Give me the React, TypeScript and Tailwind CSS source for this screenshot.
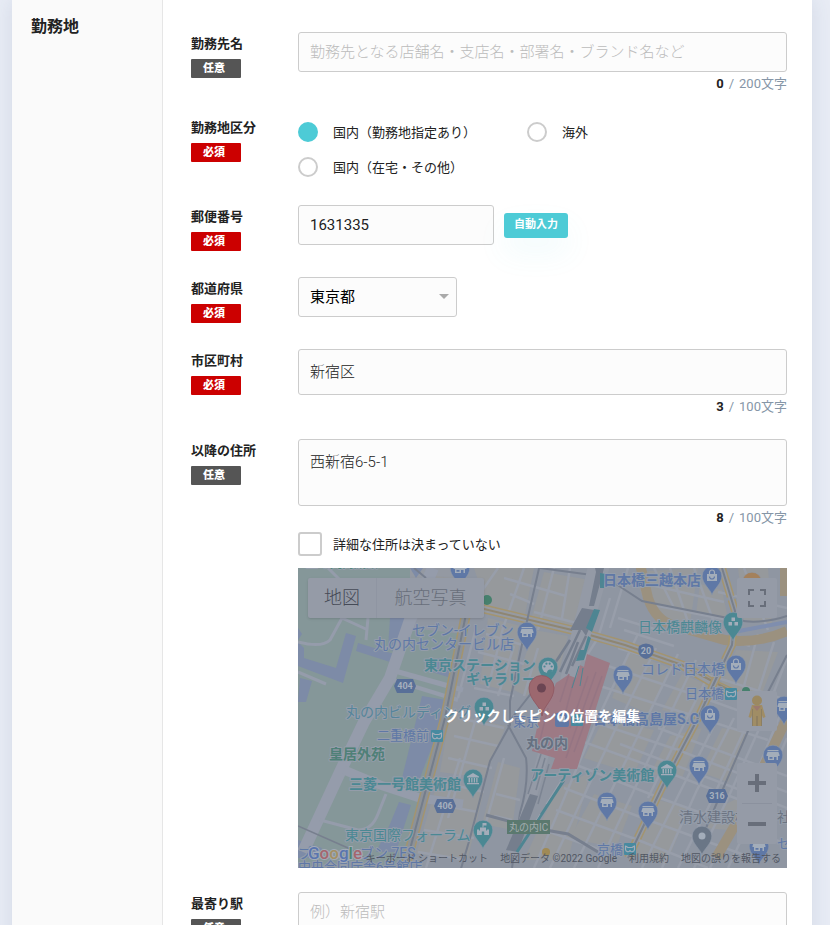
import { ReactNode, useState } from "react";

type PinKind = "shop" | "bag" | "museum" | "flower" | "palette" | "school" | "dot";

interface IPin {
  x: number;
  y: number;
  kind: PinKind;
  color: string;
}

interface ILabel {
  x: number;
  y: number;
  text: string;
  color: string;
  size?: number;
  bold?: boolean;
}

const BLUE = "#5f78a6";
const TEAL = "#4b8893";
const GRAY = "#6a7686";

const pins: IPin[] = [
  { x: 162, y: 0, kind: "shop", color: BLUE },
  { x: 229, y: 64, kind: "shop", color: BLUE },
  { x: 250, y: 99, kind: "palette", color: TEAL },
  { x: 186, y: 139, kind: "flower", color: TEAL },
  { x: 325, y: 107, kind: "shop", color: BLUE },
  { x: 414, y: 8, kind: "bag", color: BLUE },
  { x: 454, y: 14, kind: "dot", color: "#a4815c" },
  { x: 435, y: 54, kind: "flower", color: TEAL },
  { x: 438, y: 97, kind: "bag", color: BLUE },
  { x: 412, y: 147, kind: "bag", color: BLUE },
  { x: 486, y: 138, kind: "shop", color: BLUE },
  { x: 175, y: 211, kind: "museum", color: TEAL },
  { x: 185, y: 262, kind: "school", color: TEAL },
  { x: 309, y: 234, kind: "shop", color: BLUE },
  { x: 369, y: 202, kind: "museum", color: TEAL },
  { x: 401, y: 198, kind: "shop", color: BLUE },
  { x: 475, y: 187, kind: "shop", color: BLUE },
  { x: 350, y: 243, kind: "shop", color: BLUE },
  { x: 404, y: 268, kind: "dot", color: GRAY },
  { x: 461, y: 278, kind: "shop", color: BLUE },
];

const labels: ILabel[] = [
  { x: 8, y: 0, text: "三の丸尚蔵館", color: "#4d8577", size: 12 },
  { x: 114, y: 67, text: "セブン-イレブン", color: BLUE },
  { x: 76, y: 81, text: "丸の内センタービル店", color: BLUE },
  { x: 126, y: 102, text: "東京ステーション", color: TEAL, bold: true },
  { x: 168, y: 116, text: "ギャラリー", color: TEAL, bold: true },
  { x: 48, y: 149, text: "丸の内ビルディング", color: "#56859a" },
  { x: 79, y: 172, text: "二重橋前", color: BLUE, size: 13 },
  { x: 31, y: 191, text: "皇居外苑", color: "#4f8077", bold: true },
  { x: 51, y: 221, text: "三菱一号館美術館", color: TEAL, bold: true },
  { x: 47, y: 272, text: "東京国際フォーラム", color: TEAL },
  { x: 0, y: 290, text: "プ", color: BLUE },
  { x: 62, y: 290, text: "ブン 7ES", color: BLUE },
  { x: 0, y: 303, text: "中央合同庁舎6号館店", color: BLUE, size: 13 },
  { x: 305, y: 17, text: "日本橋三越本店", color: BLUE, bold: true },
  { x: 340, y: 64, text: "日本橋麒麟像", color: TEAL },
  { x: 343, y: 106, text: "コレド日本橋", color: BLUE },
  { x: 387, y: 130, text: "日本橋", color: BLUE, size: 13 },
  { x: 295, y: 156, text: "日本橋高島屋S.C", color: BLUE, bold: true },
  { x: 215, y: 158, text: "東京", color: BLUE, size: 13 },
  { x: 228, y: 180, text: "丸の内", color: "#667080", bold: true },
  { x: 232, y: 212, text: "アーティゾン美術館", color: TEAL, bold: true },
  { x: 299, y: 286, text: "京橋", color: BLUE, size: 13 },
  { x: 381, y: 254, text: "清水建設株式会社", color: "#6c7482" },
  { x: 479, y: 280, text: "セ", color: BLUE, size: 13 },
];

const routes = [
  { x: 107, y: 118, text: "404" },
  { x: 147, y: 238, text: "406" },
  { x: 419, y: 228, text: "316" },
];

const metros = [
  [139, 168],
  [279, 152],
  [433, 126],
  [332, 281],
];

// streets that run down to the left, then the ones that cross them
const streets = [
  "M200 0L172 40M226 0L205 60L190 120M256 0L240 62M272 0L264 50M206 10L268 28M212 26L236 36M236 44L290 58",
  "M216 78L200 128M240 80L226 128M178 60L160 130M188 66L228 78M180 84L226 96M176 120L216 128",
  "M160 150L206 160M156 168L200 178M150 190L194 200M142 214L186 224M136 236L180 244M126 262L176 270M120 284L168 292M178 150L150 250M162 190L128 300M206 190L186 262M198 226L222 232M196 248L214 252",
  "M312 30L300 70L286 92M330 0L312 60M372 0L394 66M356 0L376 40M396 0L418 60M340 14L426 34M350 36L440 54M446 0L470 62M420 24L489 40M320 50L366 64M326 62L376 78",
  "M340 66L300 150L262 240L236 300M358 80L318 160L280 240L252 300M380 86L336 176L300 250L276 300M398 92L354 184L318 260L300 300M412 104L384 160L350 230",
  "M430 70L452 78M460 66L440 140M476 74L452 150L410 240L380 300M489 90L466 150L430 230L396 300M489 130L452 220L412 300M489 170L462 232L430 300M420 150L384 220L344 300M436 150L398 224L364 300",
  "M310 98L400 128L489 160M302 118L390 146L470 172M320 80L420 110L489 132M296 154L380 182L489 224M286 174L374 206L489 250M276 196L362 230L489 276M266 220L350 252L460 292M258 242L340 272L410 300M246 262L320 288M322 176L489 240M360 160L489 208",
];

const blocks = [
  "M176 0L236 0L226 52L190 42Z",
  "M246 4L292 12L274 58L234 48Z",
  "M190 50L224 58L214 124L182 116Z",
  "M236 62L270 68L262 100L228 128L216 122Z",
  "M152 146L208 158L186 210L142 204Z",
  "M140 212L186 222L170 290L118 286Z",
  "M200 194L222 200L214 262L184 256Z",
  "M258 222L292 204L270 292L226 292Z",
  "M336 4L346 34L366 52L392 56L400 0Z",
  "M402 16L424 22L430 50L398 46Z",
  "M440 0L470 0L474 56L446 52Z",
  "M330 84L372 100L352 146L314 130Z",
  "M384 106L412 118L396 150L364 142Z",
  "M438 82L480 84L460 136L420 122Z",
  "M306 150L356 162L336 206L286 190Z",
  "M372 168L404 160L384 210L352 206Z",
  "M424 160L450 164L430 214L402 204Z",
  "M296 226L334 238L318 280L272 270Z",
  "M352 230L392 240L368 296L336 288Z",
  "M428 236L452 224L430 262L408 260Z",
];

function PinGlyph({ kind }: { kind: PinKind }) {
  const fill = "#a3adba";
  switch (kind) {
    case "shop":
      return (
        <g fill={fill}>
          <path d="M-5.500 -5H5.500V-3.800H-5.500Z" />
          <path d="M-5.500 -3L-6.500 0V1H6.500V0L5.500 -3Z" />
          <path fillRule="evenodd" d="M-5 1H5V5H3.500V2H1V5H-5ZM-3.500 2V3.800H-0.500V2Z" />
        </g>
      );
    case "bag":
      return (
        <g>
          <path d="M-5 -2H5V5H-5Z" fill={fill} />
          <path d="M-2.500 -2V-3.500A2.500 2.500 0 0 1 2.500 -3.500V-2" fill="none" stroke={fill} strokeWidth="1.200" />
          <path d="M-2.500 0.500A2.500 2.500 0 0 0 2.500 0.500" fill="none" stroke={BLUE} strokeWidth="1.200" />
        </g>
      );
    case "museum":
      return (
        <g fill={fill}>
          <path d="M0 -6L6 -2.500V-1.500H-6V-2.500Z" />
          <path d="M-4.500 -1H-3V3.500H-4.500ZM-1.800 -1H-0.500V3.500H-1.800ZM0.800 -1H2V3.500H0.800ZM3.200 -1H4.500V3.500H3.200ZM-6 4H6V5.200H-6Z" />
        </g>
      );
    case "flower":
      return (
        <g fill={fill}>
          <rect x="-1.500" y="-4.500" width="3.500" height="3.500" />
          <rect x="-4.500" y="0" width="3.500" height="3.500" />
          <rect x="1.500" y="0" width="3.500" height="3.500" />
        </g>
      );
    case "palette":
      return (
        <g>
          <circle r="6" fill={fill} />
          <g fill={TEAL}>
            <circle cx="-3.500" cy="-0.500" r="1.100" />
            <circle cx="-1.600" cy="-3.300" r="1.100" />
            <circle cx="1.700" cy="-3.300" r="1.100" />
            <circle cx="3.700" cy="-0.500" r="1.100" />
            <path d="M-1 6C-1 3 1 1.500 5 3L3 6Z" />
          </g>
        </g>
      );
    case "school":
      return (
        <g fill={fill}>
          <path d="M-0.500 -7H3.500V-4.500H0.500V-2.500H-0.500Z" />
          <path fillRule="evenodd" d="M-6 -0.500H-4V0.500H-3V-2.500H3V0.500H4V-0.500H6V5H-6ZM-1.200 1.500V5H1.200V1.500Z" />
        </g>
      );
    default:
      return <circle r="3.500" fill={fill} />;
  }
}

function MapPin({ x, y, kind, color }: IPin) {
  return (
    <g transform={`translate(${x} ${y})`}>
      <path
        d="M0 19C-1.500 13 -9.800 8 -9.800 0A9.800 9.800 0 0 1 9.800 0C9.800 8 1.500 13 0 19Z"
        fill={color}
        stroke="#8e98a8"
        strokeWidth="0.600"
      />
      <PinGlyph kind={kind} />
    </g>
  );
}

function MapDrawing() {
  return (
    <svg
      viewBox="0 0 489 300"
      preserveAspectRatio="xMidYMid slice"
      className="absolute inset-0 h-full w-full"
      fontFamily="Roboto, 'Noto Sans CJK JP', sans-serif"
      aria-hidden="true"
    >
      <rect width="489" height="300" fill="#8f96a2" />
      {blocks.map((d) => (
        <path key={d} d={d} fill="#96999c" />
      ))}
      <g fill="none" stroke="#989eaa" strokeWidth="2.500">
        {streets.map((d) => (
          <path key={d} d={d} />
        ))}
      </g>

      {/* palace garden and moat */}
      <path d="M0 0H128L112 60L165 66L143 150L108 300H0Z" fill="#859799" />
      <path d="M112 0H170L165 50L112 50Z" fill="#9499a2" />
      <path d="M138 8L168 12L164 30L134 24Z" fill="#96999c" />
      <g fill="#7d8ba7">
        <path d="M0 60L4 66L0 72ZM0 74L6 80L6 90L38 100L48 65L58 68L45 115L0 98Z" />
        <path d="M60 75L96 86L92 94L58 83Z" />
        <path d="M92 50H108L98 84L90 81Z" />
        <path d="M2 110L14 113L8 134H0Z" />
        <path d="M124 128L148 132L138 168L120 215L104 210Z" />
        <path d="M101 234L113 237L98 284H78L92 256Z" />
        <path d="M112 0H125L118 10Z" />
        <path d="M0 272L24 280L20 290H0Z" />
        <path d="M140 90L158 94L153 110L134 104Z" />
      </g>
      <g fill="none" stroke="#959cab">
        <path d="M135 0L112 52L92 110L66 154L43 202L5 284" strokeWidth="12" />
        <path d="M97 103L165 122" strokeWidth="5" />
        <path d="M95 112L160 132" strokeWidth="4" />
        <path d="M46 202L82 217L122 230L165 236" strokeWidth="9" />
        <path d="M40 10L44 50L70 62M44 50L32 72Q24 80 0 74M70 50L68 72" strokeWidth="3" />
        <path d="M0 104L28 116M22 252L60 262Q74 262 80 246L88 226M30 0L42 12" strokeWidth="3" />
      </g>
      <path d="M0 258L50 280L70 292" fill="none" stroke="#777f8e" strokeWidth="1.500" />

      {/* expressways */}
      <g fill="none">
        <path d="M342 -4L350 30Q358 54 378 58L427 72Q460 76 489 63" stroke="#9b917f" strokeWidth="10" />
        <path d="M436 64L489 54" stroke="#7f8eae" strokeWidth="4" />
        <path d="M487 0V28M489 150L467 196L440 252L418 290" stroke="#9b917f" strokeWidth="10" />
        <path d="M168 46L147 150L107 300" stroke="#a3946f" strokeWidth="10" />
        <path d="M168 46L147 150L107 300" stroke="#8d9298" strokeWidth="7" />
        <path d="M168 46L147 150L107 300" stroke="#747d8b" strokeWidth="2" />
        <path d="M182 40L274 62L327 77L384 97L420 118L450 132" stroke="#a3946f" strokeWidth="9" />
        <path d="M182 40L274 62L327 77L384 97L420 118L450 132" stroke="#969aa1" strokeWidth="6" />
        <path d="M182 40L274 62L327 77L384 97L450 132" stroke="#8f8672" strokeWidth="2" />
        <path
          d="M424 0L437 43L434 77L417 113L400 150L370 207L330 290"
          stroke="#a3946f"
          strokeWidth="8"
          strokeDasharray="30 3"
        />
        <path d="M424 0L437 43L434 77L417 113L400 150L370 207L330 290" stroke="#959aa3" strokeWidth="5" />
        <path d="M424 0L437 43L434 77L417 113L400 150L370 207L330 290" stroke="#777f8c" strokeWidth="2" />
      </g>

      {/* rails */}
      <g fill="none" stroke="#777f8e" strokeWidth="2">
        <path d="M242 -4L229 53L212 133V157L192 193L172 270L162 304" />
        <path d="M210 157L228 190Q231 215 222 245L214 300" />
        <path d="M242 0L294 7M253 100L210 155M315 14L344 33L440 52Q460 57 489 48M489 87L450 163L408 260" />
        <path d="M188 247L236 260L270 266L300 284" strokeWidth="3" />
        <path d="M116 0L128 10" />
      </g>

      {/* Tokyo station and its tracks */}
      <path d="M290 -2H312L292 70L262 150L236 238L218 290H208L228 230L244 170L262 112Z" fill="#949aa6" />
      <path
        d="M289 86L312 95L279 201L253 201L257 190L234 183L240 155L258 115L270 107L278 110L282 97L286 99Z"
        fill="#9d7a85"
      />
      <path
        d="M271 106L262 134M276 112L266 150M290 108L272 160M298 104L268 190M304 108L276 184M250 140L242 172"
        stroke="#957583"
        strokeWidth="1.500"
      />
      <path d="M297 0H306L303 12L296 38H291L298 4ZM284 40L296 42L294 54L288 68L284 62L272 62Z" fill="#757e8d" />
      <path
        d="M282 62L262 104M288 68L274 98M272 72L246 112M280 74L268 106M262 88L240 118"
        fill="none"
        stroke="#757e8d"
        strokeWidth="2.500"
      />
      <path d="M247 190L238 222M251 196L240 236M243 186L230 226" fill="none" stroke="#7c8492" strokeWidth="1.500" />
      <path d="M232 226L240 228L220 284L208 282Z" fill="#757e8d" />
      <path
        d="M302 5L308 6L306 20H302ZM296 41L302 42L294 64L288 60ZM290 68L293 70L286 92L278 93L282 82L286 82Z"
        fill="#4e8592"
      />
      <path d="M266 212L219 284" stroke="#4e8592" strokeWidth="3" />
      <path d="M262 214L248 236M242 246L232 262" stroke="#9ba3af" strokeWidth="1" />
      <path d="M281 98L274 120M285 100L282 118" stroke="#4e8592" strokeWidth="1" />

      <circle cx="189" cy="32" r="5" fill="#46806d" />
      <circle cx="448" cy="123" r="4" fill="#46806d" />
      <circle cx="248" cy="284" r="4" fill="#a08a55" />
      {metros.map(([x, y]) => (
        <g key={`${x}-${y}`} transform={`translate(${x} ${y})`}>
          <rect x="-6" y="-6" width="12" height="12" rx="1" fill="#478aa0" />
          <path
            d="M-4.500 -3L-2 -1.500H2L4.500 -3V0.500A2.400 2.400 0 0 1 0 1.500A2.400 2.400 0 0 1 -4.500 0.500Z"
            fill="none"
            stroke="#a3adba"
            strokeWidth="1.200"
            strokeLinejoin="round"
          />
        </g>
      ))}
      <rect x="257" y="145" width="14" height="14" rx="2" fill={BLUE} />
      <path d="M261 148H267V154H261Z" fill="#a3adba" />

      {labels.map((label) => (
        <text
          key={label.text}
          x={label.x}
          y={label.y}
          fontSize={label.size || 14}
          fontWeight={label.bold ? 700 : 400}
          fill={label.color}
          stroke="#949daa"
          strokeWidth="2"
          strokeLinejoin="round"
          paintOrder="stroke"
        >
          {label.text}
        </text>
      ))}
      {pins.map((pin) => (
        <MapPin key={`${pin.x}-${pin.y}`} {...pin} />
      ))}
      {routes.map((route) => (
        <g key={route.text} transform={`translate(${route.x} ${route.y})`}>
          <path d="M-11 0L-8 -7H8L11 0L8 7H-8Z" fill="#586f98" />
          <text y="3" fontSize="9" fontWeight="700" textAnchor="middle" fill="#a6afbd">
            {route.text}
          </text>
        </g>
      ))}
      <path d="M341 78Q348 73 355 78Q358 88 348 91Q338 88 341 78Z" fill="#586f98" />
      <text x="348" y="86" fontSize="9" fontWeight="700" textAnchor="middle" fill="#a6afbd">
        20
      </text>
      <rect x="209" y="252" width="43" height="14" fill="#5b796f" />
      <text x="211" y="263" fontSize="10" fill="#a3adb0">
        丸の内IC
      </text>

      {/* selected place */}
      <path
        d="M244 148C243 138 231 132 231 120A12.500 12.500 0 0 1 256 120C256 132 245 138 244 148Z"
        fill="#9c686f"
        stroke="#8e5560"
        strokeWidth="0.800"
      />
      <circle cx="243.500" cy="120" r="4.500" fill="#6b4553" />

      <text x="10" y="291" fontSize="17" fontWeight="500" stroke="#a3abb8" strokeWidth="2" paintOrder="stroke">
        <tspan fill="#5a75ae">G</tspan>
        <tspan fill="#a5666f">o</tspan>
        <tspan fill="#a39064">o</tspan>
        <tspan fill="#5a75ae">g</tspan>
        <tspan fill="#4f866f">l</tspan>
        <tspan fill="#a5666f">e</tspan>
      </text>
    </svg>
  );
}

function MapControls() {
  return (
    <>
      <div className="absolute top-[10px] left-[10px] flex h-10 rounded-xs bg-[#959ba7] text-lg font-light shadow-sm">
        <button type="button" className="w-[69px] border-r border-[#8f95a2] text-[#454a56]">
          地図
        </button>
        <button type="button" className="w-[107px] text-[#686e7a]">
          航空写真
        </button>
      </div>
      <button
        type="button"
        aria-label="全画面表示"
        className="absolute top-[10px] right-[10px] flex size-10 items-center justify-center rounded-xs bg-[#959ba7]"
      >
        <svg viewBox="0 0 18 18" className="size-[18px]" fill="none" stroke="#686e7a" strokeWidth="2">
          <path d="M1 6V1H6M12 1H17V6M17 12V17H12M6 17H1V12" />
        </svg>
      </button>
      <div className="absolute right-[10px] bottom-6 flex flex-col gap-8">
        <button
          type="button"
          aria-label="ストリートビュー"
          className="flex size-10 items-center justify-center rounded-xs bg-[#959ba7]"
        >
          <svg viewBox="0 0 18 32" className="h-8 w-[18px]">
            <path d="M4 10H14L17.500 22L15 23L13.500 19V31H4.500V19L3 23L0.500 22Z" fill="#a08d65" />
            <path d="M5 11L9 16L13 11Z" fill="#9c7a70" />
            <path d="M8.500 21H9.500V31H8.500Z" fill="#80745f" />
            <path d="M4.500 14V31M13.500 14V31" stroke="#8c7f63" />
            <circle cx="9" cy="5.500" r="5" fill="#9b8962" />
          </svg>
        </button>
        <div className="flex w-10 flex-col items-center rounded-xs bg-[#959ba7]">
          <button type="button" aria-label="ズームイン" className="flex size-10 items-center justify-center">
            <svg viewBox="0 0 18 18" className="size-[18px]" fill="#686e7a">
              <path d="M7 0H11V7H18V11H11V18H7V11H0V7H7Z" />
            </svg>
          </button>
          <div className="h-px w-[30px] bg-[#8b919e]" />
          <button type="button" aria-label="ズームアウト" className="flex size-10 items-center justify-center">
            <svg viewBox="0 0 18 18" className="size-[18px]" fill="#686e7a">
              <path d="M0 7H18V11H0Z" />
            </svg>
          </button>
        </div>
      </div>
      <div className="absolute right-[6px] bottom-px flex gap-3 text-[10px] leading-4 text-[#515763]">
        <span>キーボード ショートカット</span>
        <span>地図データ ©2022 Google</span>
        <span>利用規約</span>
        <span>地図の誤りを報告する</span>
      </div>
    </>
  );
}

interface IRow {
  label: string;
  required?: boolean;
  htmlFor?: string;
  children: ReactNode;
}

function FormRow({ label, required, htmlFor, children }: IRow) {
  return (
    <div className="flex pb-6">
      <div className="h-12 w-[107px] shrink-0">
        <label htmlFor={htmlFor} className="block text-[13px] leading-6 font-bold text-[#222]">
          {label}
        </label>
        <span
          className={`mt-[3px] block h-[19px] w-[50px] rounded-[1px] pl-3 text-[11px] leading-5 font-black text-white ${
            required ? "bg-[#cc0000]" : "bg-[#555]"
          }`}
        >
          {required ? "必須" : "任意"}
        </span>
      </div>
      <div className="min-w-0 flex-1">{children}</div>
    </div>
  );
}

function Counter({ count, max }: { count: number; max: number }) {
  return (
    <p className="flex justify-end gap-[5px] pt-1 text-[13px] leading-4 text-[#8696a7]">
      <b className="text-[#222]">{count}</b>
      <span>/</span>
      <span>{max}文字</span>
    </p>
  );
}

const fieldClass =
  "block w-full rounded-[3px] border border-[#ccc] bg-[#fcfcfc] px-[11px] text-[15px] outline-none placeholder:text-[#bbb]";

const areas = ["国内（勤務地指定あり）", "海外", "国内（在宅・その他）"];

export default function App() {
  const [name, setName] = useState("");
  const [area, setArea] = useState(areas[0]);
  const [zip, setZip] = useState("1631335");
  const [city, setCity] = useState("新宿区");
  const [address, setAddress] = useState("西新宿6-5-1");

  return (
    <div className="h-screen overflow-hidden bg-[#e8ecf5] pr-[18px] pl-3 font-[Roboto,'Noto_Sans_CJK_JP',sans-serif] text-[#222]">
      <div className="flex min-h-full bg-white shadow-[0_0_20px_rgba(60,80,120,0.12)]">
        <aside className="w-[151px] shrink-0 border-r border-[#e6e6e6] bg-[#fafafa] pt-[15px] pl-[19px]">
          <h2 className="text-base leading-6 font-bold">勤務地</h2>
        </aside>
        <main className="min-w-0 flex-1 pt-8 pr-[25px] pl-7">
          <FormRow label="勤務先名" htmlFor="name">
            <input
              id="name"
              value={name}
              onChange={(e) => setName(e.target.value)}
              placeholder="勤務先となる店舗名・支店名・部署名・ブランド名など"
              className={`${fieldClass} h-10 font-light`}
            />
            <Counter count={name.length} max={200} />
          </FormRow>

          <FormRow label="勤務地区分" required>
            <div className="grid grid-cols-[229px_1fr] gap-y-[15px] pt-[6px] pb-1">
              {areas.map((item) => (
                <label key={item} className="flex h-5 items-center gap-[15px] text-[13px] leading-5">
                  <input
                    type="radio"
                    name="area"
                    checked={area === item}
                    onChange={() => setArea(item)}
                    className="size-5 shrink-0 appearance-none rounded-full border-2 border-[#ccc] bg-white checked:border-[#4dcbd6] checked:bg-[#4dcbd6]"
                  />
                  <span className="pt-0.5">{item}</span>
                </label>
              ))}
            </div>
          </FormRow>

          <FormRow label="郵便番号" required htmlFor="zip">
            <div className="flex items-center gap-[10px]">
              <div className="w-[196px]">
                <input
                  id="zip"
                  value={zip}
                  onChange={(e) => setZip(e.target.value)}
                  className={`${fieldClass} h-10`}
                />
              </div>
              <button
                type="button"
                className="h-[25px] w-16 rounded-[3px] bg-[#4dcbd6] text-[11px] font-bold text-white shadow-[0_15px_30px_rgba(77,203,214,0.08)]"
              >
                自動入力
              </button>
            </div>
          </FormRow>

          <FormRow label="都道府県" required htmlFor="pref">
            <div className="relative w-[159px]">
              <select id="pref" className={`${fieldClass} h-10 appearance-none text-black`}>
                <option>東京都</option>
                <option>神奈川県</option>
                <option>大阪府</option>
              </select>
              <svg
                viewBox="0 0 10 5"
                className="pointer-events-none absolute top-[17px] right-2 h-[5px] w-[10px]"
                fill="#aaa"
              >
                <path d="M0 0H10L5 5Z" />
              </svg>
            </div>
          </FormRow>

          <FormRow label="市区町村" required htmlFor="city">
            <textarea
              id="city"
              value={city}
              onChange={(e) => setCity(e.target.value)}
              className={`${fieldClass} h-[46px] resize-none py-[10px] leading-6 font-light`}
            />
            <Counter count={city.length} max={100} />
          </FormRow>

          <FormRow label="以降の住所" htmlFor="address">
            <textarea
              id="address"
              value={address}
              onChange={(e) => setAddress(e.target.value)}
              className={`${fieldClass} h-[67px] resize-none py-[10px] leading-6 font-light`}
            />
            <Counter count={address.length} max={100} />
            <label className="mt-[6px] flex items-center gap-[11px] text-[13px] leading-5">
              <input
                type="checkbox"
                className="size-6 appearance-none rounded-[3px] border-2 border-[#ccc] bg-white checked:border-[#4dcbd6] checked:bg-[#4dcbd6]"
              />
              <span className="pt-0.5">詳細な住所は決まっていない</span>
            </label>
            <div className="relative mt-3 h-[300px] overflow-hidden">
              <MapDrawing />
              <MapControls />
              <button type="button" className="absolute inset-0 pb-1 text-sm font-bold text-white">
                クリックしてピンの位置を編集
              </button>
            </div>
          </FormRow>

          <FormRow label="最寄り駅" htmlFor="station">
            <input id="station" placeholder="例）新宿駅" className={`${fieldClass} h-10 font-light`} />
          </FormRow>
        </main>
      </div>
    </div>
  );
}
